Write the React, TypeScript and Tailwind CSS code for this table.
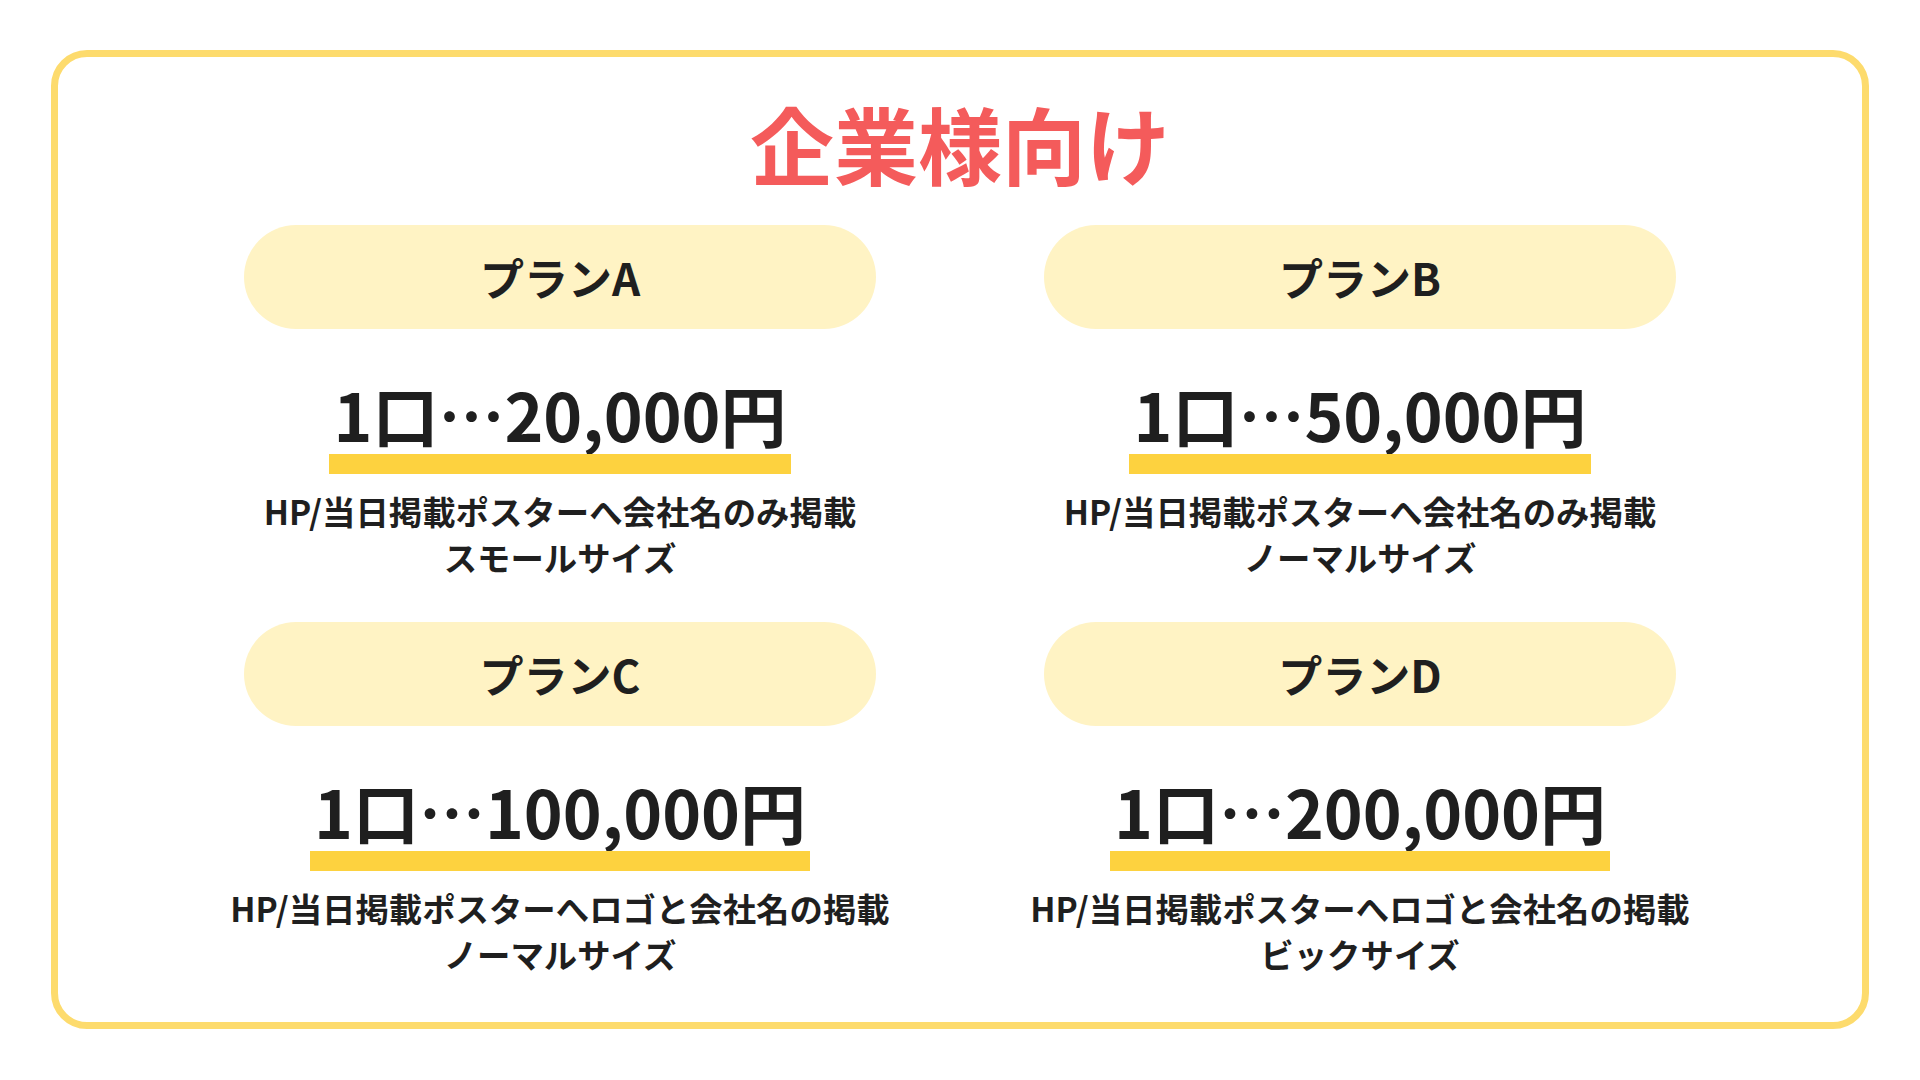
import React from 'react';

interface Plan {
  name: string;
  price: string;
  line1: string;
  line2: string;
}

const plans: Plan[] = [
  { name: 'プランA', price: '1口…20,000円', line1: 'HP/当日掲載ポスターへ会社名のみ掲載', line2: 'スモールサイズ' },
  { name: 'プランB', price: '1口…50,000円', line1: 'HP/当日掲載ポスターへ会社名のみ掲載', line2: 'ノーマルサイズ' },
  { name: 'プランC', price: '1口…100,000円', line1: 'HP/当日掲載ポスターへロゴと会社名の掲載', line2: 'ノーマルサイズ' },
  { name: 'プランD', price: '1口…200,000円', line1: 'HP/当日掲載ポスターへロゴと会社名の掲載', line2: 'ビックサイズ' },
];

function PlanCard({ plan }: { plan: Plan }) {
  return (
    <div className="flex flex-col items-center">
      <div className="w-full h-[104px] rounded-full bg-[#FFF3C4] flex items-center justify-center">
        <span className="text-[44px] font-bold leading-none text-[#1f1f1f]">{plan.name}</span>
      </div>
      <div className="mt-[51px] inline-flex flex-col items-stretch">
        <span className="px-[4px] text-[66px] font-bold leading-none text-[#1f1f1f] whitespace-nowrap">
          {plan.price}
        </span>
        <div className="mt-[8px] h-[20px] bg-[#FDD23F]" />
      </div>
      <div className="mt-[14px] text-center text-[33.4px] font-bold leading-[46px] text-[#1f1f1f] whitespace-nowrap">
        <div>{plan.line1}</div>
        <div>{plan.line2}</div>
      </div>
    </div>
  );
}

export default function App() {
  return (
    <div
      className="w-full h-screen bg-white pt-[50px] pl-[51px]"
      style={{ fontFamily: '"Noto Sans CJK JP", "Noto Sans", sans-serif' }}
    >
      <div className="w-[1818px] h-[979px] border-[7px] border-[#FDDB6D] rounded-[36px] flex flex-col items-center pt-[44px]">
        <h1 className="text-[84px] font-bold leading-none text-[#F45B5B]">企業様向け</h1>
        <div className="mt-[40px] grid grid-cols-[632px_632px] gap-x-[168px] gap-y-[42px]">
          {plans.map((p) => (
            <PlanCard key={p.name} plan={p} />
          ))}
        </div>
      </div>
    </div>
  );
}
